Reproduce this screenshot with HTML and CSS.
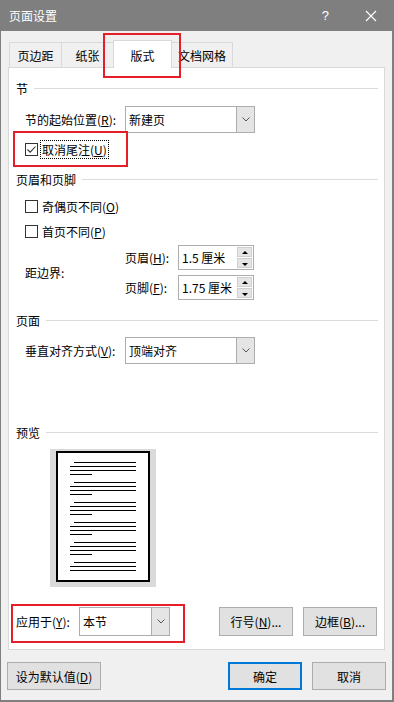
FILE: index.html
```html
<!DOCTYPE html>
<html lang="zh-CN">
<head>
  <meta charset="UTF-8">
  <meta name="viewport" content="width=device-width, initial-scale=1.0">
  <title>页面设置</title>
  <link rel="stylesheet" href="styles.css">
</head>
<body>
  <div class="window">
    <div class="titlebar">
      <span class="title">页面设置</span>
      <span class="help">?</span>
      <span class="close">
        <svg width="12" height="12" viewBox="0 0 12 12"><path d="M1 1 L11 11 M11 1 L1 11" stroke="#fff" stroke-width="1.2" fill="none"/></svg>
      </span>
    </div>

    <div class="tabs">
      <div class="tab first">页边距</div>
      <div class="tab">纸张</div>
      <div class="tab active">版式</div>
      <div class="tab">文档网格</div>
    </div>

    <div class="panel">
      <div class="group-title g1"><span>节</span><i></i></div>
      <div class="row r-start">
        <span class="label">节的起始位置(<u>R</u>):</span>
        <div class="select w130">
          <span class="value">新建页</span>
          <span class="drop"><svg width="8" height="5" viewBox="0 0 8 5"><path d="M0.5 0.5 L4 4 L7.5 0.5" stroke="#555" fill="none"/></svg></span>
        </div>
      </div>
      <div class="row r-check1">
        <span class="check checked"><svg width="11" height="11" viewBox="0 0 11 11"><path d="M1.5 5.5 L4.2 8.2 L9.5 2.5" stroke="#333" stroke-width="1.1" fill="none"/></svg></span>
        <span class="check-text focus">取消尾注(<u>U</u>)</span>
      </div>

      <div class="group-title g2"><span>页眉和页脚</span><i></i></div>
      <div class="row r-check2">
        <span class="check"></span>
        <span class="check-text">奇偶页不同(<u>O</u>)</span>
      </div>
      <div class="row r-check3">
        <span class="check"></span>
        <span class="check-text">首页不同(<u>P</u>)</span>
      </div>
      <div class="row r-margins">
        <span class="label">距边界:</span>
        <div class="spins">
          <div class="spin-row">
            <span class="spin-label">页眉(<u>H</u>):</span>
            <div class="spin">
              <span class="value">1.5 厘米</span>
              <span class="arrows"><b class="up"></b><b class="down"></b></span>
            </div>
          </div>
          <div class="spin-row">
            <span class="spin-label">页脚(<u>F</u>):</span>
            <div class="spin">
              <span class="value">1.75 厘米</span>
              <span class="arrows"><b class="up"></b><b class="down"></b></span>
            </div>
          </div>
        </div>
      </div>

      <div class="group-title g3"><span>页面</span><i></i></div>
      <div class="row r-valign">
        <span class="label">垂直对齐方式(<u>V</u>):</span>
        <div class="select w130">
          <span class="value">顶端对齐</span>
          <span class="drop"><svg width="8" height="5" viewBox="0 0 8 5"><path d="M0.5 0.5 L4 4 L7.5 0.5" stroke="#555" fill="none"/></svg></span>
        </div>
      </div>

      <div class="group-title g4"><span>预览</span><i></i></div>
      <div class="preview">
        <div class="page">
          <div class="para"><i class="indent"></i><i></i><i></i><i class="short"></i></div>
          <div class="para"><i class="indent"></i><i></i><i></i><i class="short"></i></div>
          <div class="para"><i class="indent"></i><i></i><i></i><i class="short"></i></div>
          <div class="para"><i class="indent"></i><i></i><i></i><i class="short"></i></div>
          <div class="para"><i class="indent"></i><i></i><i></i><i class="short"></i></div>
          <div class="para"><i class="indent"></i><i></i><i></i></div>
        </div>
      </div>

      <div class="apply-row">
        <span class="apply-label">应用于(<u>Y</u>):</span>
        <div class="select w91">
          <span class="value">本节</span>
          <span class="drop"><svg width="8" height="5" viewBox="0 0 8 5"><path d="M0.5 0.5 L4 4 L7.5 0.5" stroke="#555" fill="none"/></svg></span>
        </div>
        <div class="spacer"></div>
        <button class="btn">行号(<u>N</u>)...</button>
        <button class="btn">边框(<u>B</u>)...</button>
      </div>
    </div>

    <div class="footer">
      <button class="btn wide">设为默认值(<u>D</u>)</button>
      <div class="spacer"></div>
      <button class="btn primary">确定</button>
      <button class="btn">取消</button>
    </div>

    <div class="mark mark-tab"></div>
    <div class="mark mark-check"></div>
    <div class="mark mark-apply"></div>
  </div>
</body>
</html>
```

FILE: styles.css
```css
* {
  box-sizing: border-box;
}
body {
  margin: 0;
  font-family: "Noto Sans CJK SC", "Microsoft YaHei", sans-serif;
  font-size: 12px;
  color: #000;
  background: #f0f0f0;
}
u {
  text-decoration: underline;
  text-underline-offset: 1px;
}
.window {
  position: relative;
  width: 394px;
  height: 702px;
  background: #f0f0f0;
  border-left: 1px solid #7f7f7f;
  border-right: 2px solid #7f7f7f;
  border-bottom: 2px solid #7f7f7f;
}
.titlebar {
  height: 31px;
  background: #7f7f7f;
  color: #fff;
  display: flex;
  align-items: center;
  padding-left: 8px;
}
.title {
  font-size: 12px;
}
.help {
  margin-left: auto;
  font-family: "Liberation Sans", sans-serif;
  font-size: 13px;
  margin-right: 36px;
}
.close {
  display: flex;
  margin-right: 15px;
}

/* tabs */
.tabs {
  height: 36px;
  display: flex;
  align-items: flex-end;
  padding-left: 8px;
}
.tab {
  height: 25px;
  width: 52px;
  border: 1px solid #d9d9d9;
  border-left: none;
  border-bottom: none;
  display: flex;
  align-items: center;
  justify-content: center;
  padding-top: 1px;
}
.tab.first {
  width: 53px;
  border-left: 1px solid #d9d9d9;
}
.tab.active {
  position: relative;
  z-index: 1;
  width: 59px;
  height: 28px;
  margin-left: -1px;
  margin-bottom: -1px;
  border-left: 1px solid #d9d9d9;
  background: #fff;
  padding-top: 1px;
}
.tab:last-child {
  width: 61px;
}

/* panel */
.panel {
  margin-left: 7px;
  width: 377px;
  height: 583px;
  background: #fff;
  border: 1px solid #d9d9d9;
  padding: 0 6px 0 7px;
}
.group-title {
  display: flex;
  align-items: center;
  height: 16px;
}
.group-title i {
  flex: 1;
  height: 1px;
  background: #dcdcdc;
  margin-left: 6px;
}
.g1 { margin-top: 12px; }
.g2 { margin-top: 12px; }
.g3 { margin-top: 12px; }
.g4 { margin-top: 60px; }

.row {
  display: flex;
  align-items: center;
  padding-left: 9px;
}
.label {
  width: 100px;
}
.r-start { margin-top: 10px; }
.r-check1 { margin-top: 7px; height: 19px; }
.r-check2 { margin-top: 10px; height: 18px; }
.r-check3 { margin-top: 7px; height: 18px; }
.r-margins { margin-top: 5px; }
.r-valign { margin-top: 9px; }

.select {
  display: flex;
  height: 27px;
  border: 1px solid #adadad;
  background: #fff;
}
.w130 { width: 130px; }
.w91 { width: 91px; height: 29px; }
.select .value {
  flex: 1;
  display: flex;
  align-items: center;
  padding-left: 3px;
}
.drop {
  width: 18px;
  background: #e5e5e5;
  border-left: 1px solid #adadad;
  display: flex;
  align-items: center;
  justify-content: center;
}

.check {
  width: 13px;
  height: 13px;
  border: 1px solid #333;
  background: #fff;
  display: flex;
  align-items: center;
  justify-content: center;
}
.check-text {
  margin-left: 2px;
  padding: 1px 1px;
  border: 1px dotted transparent;
  line-height: 15px;
}
.check-text.focus {
  border-color: #000;
}

.spins {
  display: flex;
  flex-direction: column;
  gap: 5px;
}
.spin-row {
  display: flex;
  align-items: center;
}
.spin-label {
  width: 53px;
}
.spin {
  width: 76px;
  height: 25px;
  border: 1px solid #adadad;
  display: flex;
  padding: 1px 1px 1px 0;
}
.spin .value {
  flex: 1;
  display: flex;
  align-items: center;
  padding-left: 3px;
}
.arrows {
  width: 15px;
  display: flex;
  flex-direction: column;
  gap: 1px;
}
.arrows b {
  flex: 1;
  background: #e5e5e5;
  border: 1px solid #cfcfcf;
  position: relative;
}
.arrows b::after {
  content: "";
  position: absolute;
  left: 4px;
  top: 3px;
  border-left: 3px solid transparent;
  border-right: 3px solid transparent;
}
.arrows .up::after {
  border-bottom: 3px solid #000;
}
.arrows .down::after {
  top: 4px;
  border-top: 3px solid #000;
}

/* preview */
.preview {
  margin: 9px 0 0 34px;
  width: 106px;
  padding: 2px 6px 5px 6px;
  background: #dadada;
}
.page {
  height: 131px;
  background: #fff;
  border: 2px solid #000;
  padding: 9px 0 0 12px;
}
.para {
  display: flex;
  flex-direction: column;
  gap: 3px;
  margin-bottom: 7px;
}
.para i {
  display: block;
  width: 66px;
  height: 1px;
  background: #000;
}
.para i.indent {
  width: 62px;
  margin-left: 4px;
}
.para i.short {
  width: 22px;
}

.apply-row {
  display: flex;
  align-items: center;
  margin-top: 20px;
}
.apply-label {
  width: 63px;
}
.spacer {
  flex: 1;
}
.btn {
  font-family: inherit;
  font-size: 12px;
  color: #000;
  height: 29px;
  width: 74px;
  background: #e1e1e1;
  border: 1px solid #adadad;
  padding: 0;
  margin-left: 10px;
}
.apply-row .btn:last-child {
  margin-right: 1px;
}

.footer {
  display: flex;
  padding: 12px 6px 0 6px;
}
.footer .btn {
  height: 28px;
}
.footer .btn.wide {
  width: 94px;
  margin-left: 0;
}
.btn.primary {
  border: 2px solid #0078d7;
}

/* red annotation frames */
.mark {
  position: absolute;
  border: 2px solid #e61e28;
  pointer-events: none;
}
.mark-tab {
  left: 102px;
  top: 33px;
  width: 78px;
  height: 45px;
}
.mark-check {
  left: 12px;
  top: 131px;
  width: 115px;
  height: 36px;
}
.mark-apply {
  left: 10px;
  top: 604px;
  width: 174px;
  height: 39px;
}
```
